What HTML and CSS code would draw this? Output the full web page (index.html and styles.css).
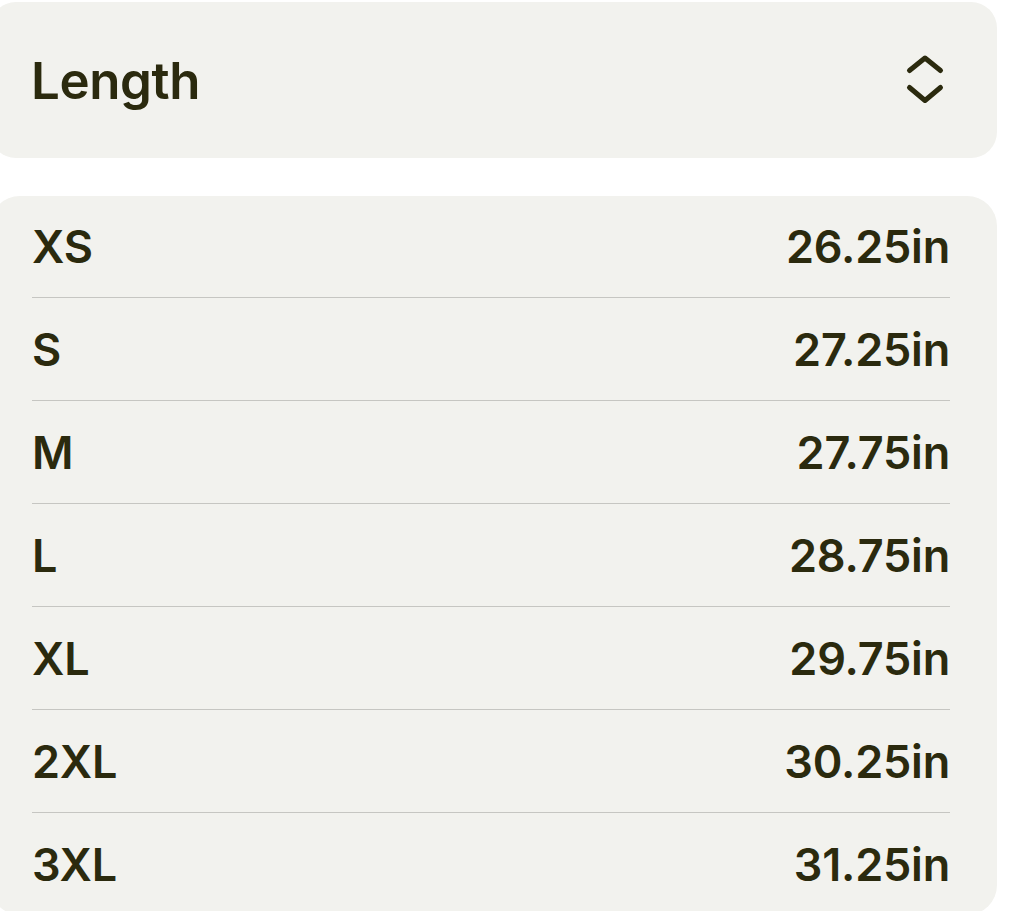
FILE: index.html
```html
<!DOCTYPE html>
<html lang="en">

<head>
    <meta charset="UTF-8">
    <title>Size Guide - Length</title>
    <link rel="stylesheet" href="styles.css">
</head>

<body>
    <main class="size-guide">
        <div class="measure-select">
            <span class="measure-label">Length</span>
            <svg class="chevrons" width="44" height="56" viewBox="0 0 44 56" aria-hidden="true">
                <path d="M6.5 18.5 L22 6 L37.5 18.5" />
                <path d="M6.5 35.5 L22 48.5 L37.5 35.5" />
            </svg>
        </div>
        <ul class="size-list">
            <li class="size-row"><span>XS</span><span>26.25in</span></li>
            <li class="size-row"><span>S</span><span>27.25in</span></li>
            <li class="size-row"><span>M</span><span>27.75in</span></li>
            <li class="size-row"><span>L</span><span>28.75in</span></li>
            <li class="size-row"><span>XL</span><span>29.75in</span></li>
            <li class="size-row"><span>2XL</span><span>30.25in</span></li>
            <li class="size-row"><span>3XL</span><span>31.25in</span></li>
        </ul>
    </main>
</body>

</html>
```

FILE: styles.css
```css
body {
    margin: 0;
    padding: 0;
    background: #ffffff;
    font-family: 'Inter', 'Liberation Sans', Arial, sans-serif;
    color: #2b2a0e;
}

.size-guide {
    display: flex;
    flex-direction: column;
    gap: 38px;
    margin: 2px 16px 0 -10px;
}

.measure-select {
    display: flex;
    align-items: center;
    justify-content: space-between;
    height: 156px;
    padding: 0 50px 0 41px;
    background: #f2f2ee;
    border-radius: 26px;
}

.measure-label {
    font-size: 51px;
    font-weight: 600;
    letter-spacing: -0.4px;
}

.chevrons {
    display: block;
    fill: none;
    stroke: #2b2a0e;
    stroke-width: 5;
    stroke-linecap: round;
    stroke-linejoin: round;
}

.size-list {
    list-style: none;
    margin: 0;
    padding: 0 47px 0 42px;
    background: #f2f2ee;
    border-radius: 30px;
}

.size-row {
    display: flex;
    align-items: center;
    justify-content: space-between;
    height: 102px;
    font-size: 45px;
    font-weight: 600;
    letter-spacing: -0.2px;
}

.size-row:first-child {
    height: 101px;
}

.size-row+.size-row {
    border-top: 1px solid #c6c6c2;
}
```
